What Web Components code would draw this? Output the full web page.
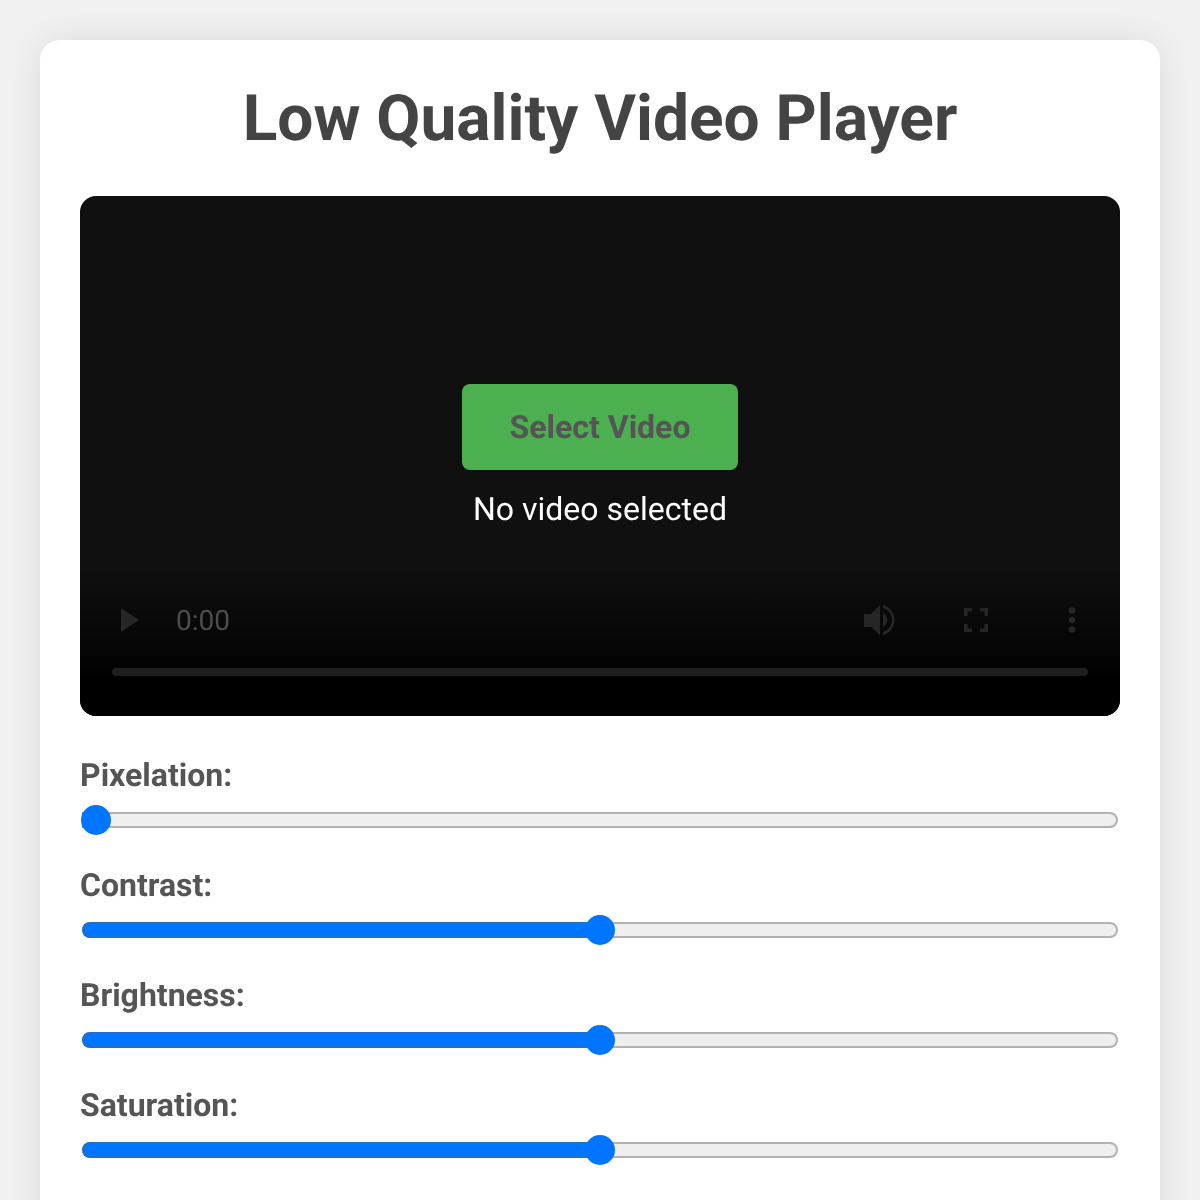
<!DOCTYPE html>
<html lang="en">
<head>
<meta charset="utf-8">
<title>Low Quality Video Player</title>
<style>
	html, body { margin: 0; padding: 0; }
	body {
		background: #f0f0f0;
		color: #555;
		font-family: Roboto, "Liberation Sans", sans-serif;
		height: 1200px;
		overflow: hidden;
		text-rendering: geometricPrecision;
	}
</style>
</head>
<body>
	<player-app heading="Low Quality Video Player">
		<video-stage></video-stage>
		<effect-slider label="Pixelation:" value="0"></effect-slider>
		<effect-slider label="Contrast:" value="50"></effect-slider>
		<effect-slider label="Brightness:" value="50"></effect-slider>
		<effect-slider label="Saturation:" value="50"></effect-slider>
	</player-app>
	<script>
		"use strict";
		(function() {
			class PlayerApp extends HTMLElement {
				constructor() {
					super();
					const shadow = this.attachShadow({ mode: "open" });
					shadow.innerHTML = `
						<style>
							:host { display: block; padding: 40px 40px 0; will-change: transform; }
							.card {
								background: #fff;
								border-radius: 20px;
								box-shadow: 0 0 32px rgba(0, 0, 0, 0.08);
								padding: 40px;
							}
							h1 {
								color: #444;
								font-size: 64px;
								font-weight: 700;
								line-height: 78px;
								margin: 0 0 38px;
								text-align: center;
							}
						</style>
						<div class="card">
							<h1></h1>
							<slot></slot>
						</div>
					`;
					shadow.querySelector("h1").textContent = this.getAttribute("heading");
				}
			}

			class VideoStage extends HTMLElement {
				constructor() {
					super();
					const shadow = this.attachShadow({ mode: "open" });
					shadow.innerHTML = `
						<style>
							:host {
								align-items: center;
								background: #101010;
								border-radius: 16px;
								display: flex;
								flex-direction: column;
								gap: 20px;
								height: 520px;
								justify-content: center;
								margin-bottom: 40px;
								overflow: hidden;
								position: relative;
							}
							button {
								background: #4caf50;
								border: 0;
								border-radius: 8px;
								color: #555;
								font: 700 32px Roboto, "Liberation Sans", sans-serif;
								height: 86px;
								padding: 0;
								position: relative;
								text-rendering: geometricPrecision;
								width: 276px;
								z-index: 1;
							}
							.status {
								color: #fff;
								font-size: 32px;
								line-height: 38px;
								position: relative;
								z-index: 1;
							}
							.controls {
								background: linear-gradient(to bottom, rgba(0, 0, 0, 0), #000 115px);
								bottom: 0;
								box-sizing: border-box;
								height: 150px;
								left: 0;
								padding: 30px 24px 0 32px;
								position: absolute;
								right: 0;
							}
							.row {
								align-items: center;
								display: flex;
								height: 48px;
							}
							.row svg { display: block; fill: #262626; flex: none; }
							.time {
								color: #4c4c4c;
								font-size: 28px;
								margin-left: 24px;
							}
							.spacer { flex: 1; }
							.bar {
								background: #1f1f1f;
								border-radius: 4px;
								height: 8px;
								margin: 24px 8px 0 0;
							}
						</style>
						<button type="button">Select Video</button>
						<div class="status">No video selected</div>
						<div class="controls">
							<div class="row">
								<svg width="40" height="48" viewBox="0 0 40 48"><path d="M9 12v24l18-12z"/></svg>
								<span class="time">0:00</span>
								<span class="spacer"></span>
								<svg width="48" height="48" viewBox="0 0 48 48" style="margin-right:48px"><path d="M8 18v13h7l9 8V9l-9 9z"/><path d="M27 17a8 8 0 0 1 0 14z"/><path d="M27 9v3a12.500 12.500 0 0 1 0 24v3a15.500 15.500 0 0 0 0-30z"/></svg>
								<svg width="48" height="48" viewBox="0 0 48 48" style="margin-right:48px"><path d="M12 12h8v3.500h-4.500V20H12zM28 12h8v8h-3.500v-4.500H28zM12 28h3.500v4.500H20V36h-8zM32.500 28H36v8h-8v-3.500h4.500z"/></svg>
								<svg width="48" height="48" viewBox="0 0 48 48"><circle cx="24" cy="14.500" r="3.300"/><circle cx="24" cy="24" r="3.300"/><circle cx="24" cy="33.500" r="3.300"/></svg>
							</div>
							<div class="bar"></div>
						</div>
					`;
				}
			}

			class EffectSlider extends HTMLElement {
				constructor() {
					super();
					const shadow = this.attachShadow({ mode: "open" });
					shadow.innerHTML = `
						<style>
							:host { display: block; height: 110px; }
							label {
								color: #555;
								display: block;
								font-size: 32px;
								font-weight: 700;
								line-height: 38px;
								margin-bottom: 11px;
							}
							.slider { box-sizing: border-box; height: 30px; padding-top: 7px; position: relative; }
							.track {
								background: #efefef;
								border: 2px solid #b2b2b2;
								border-radius: 8px;
								box-sizing: border-box;
								height: 16px;
								margin: 0 2px;
								position: relative;
							}
							.fill {
								background: #0075ff;
								border: 2px solid #1f6fcb;
								border-radius: 8px 0 0 8px;
								border-right: 0;
								bottom: -2px;
								box-sizing: border-box;
								left: -2px;
								position: absolute;
								top: -2px;
							}
							.thumb {
								background: #0075ff;
								border-radius: 50%;
								height: 30px;
								margin-left: -15px;
								position: absolute;
								top: 0;
								width: 30px;
							}
						</style>
						<label></label>
						<div class="slider">
							<div class="track"><div class="fill"></div></div>
							<div class="thumb"></div>
						</div>
					`;
					const value = Number(this.getAttribute("value"));
					shadow.querySelector("label").textContent = this.getAttribute("label");
					shadow.querySelector(".fill").style.width = `${value}%`;
					// thumb centre runs from 16px to 16px before the right end
					shadow.querySelector(".thumb").style.left = `calc(16px + (100% - 32px) * ${value / 100})`;
				}
			}

			window.customElements.define("player-app", PlayerApp);
			window.customElements.define("video-stage", VideoStage);
			window.customElements.define("effect-slider", EffectSlider);
		})();
	</script>
</body>
</html>
